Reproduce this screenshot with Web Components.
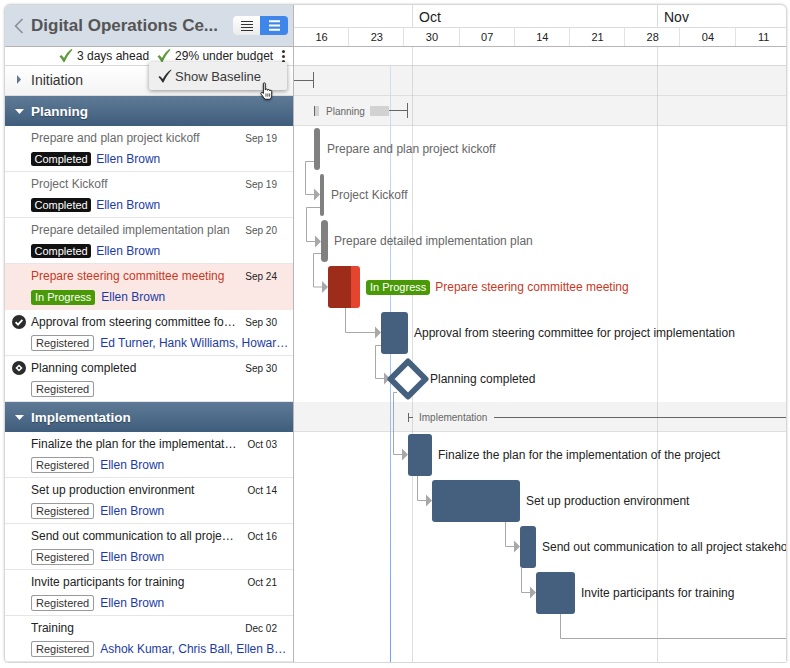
<!DOCTYPE html>
<html>
<head>
<meta charset="utf-8">
<style>
  html, body { margin: 0; background: #fff; }
  body { font-family: "Liberation Sans", Arial, sans-serif; padding: 5px 4px 0 5px; height: 663px; box-sizing: border-box; overflow: hidden; }
</style>
</head>
<body>
<gantt-app>
  <task-pane slot="left">
    <pane-title>Digital Operations Ce...</pane-title>
    <status-bar></status-bar>
    <section-row collapsed>Initiation</section-row>
    <section-row open>Planning</section-row>
    <task-row date="Sep 19" status="Completed" who="Ellen Brown">Prepare and plan project kickoff</task-row>
    <task-row date="Sep 19" status="Completed" who="Ellen Brown">Project Kickoff</task-row>
    <task-row date="Sep 20" status="Completed" who="Ellen Brown">Prepare detailed implementation plan</task-row>
    <task-row date="Sep 24" status="In Progress" who="Ellen Brown">Prepare steering committee meeting</task-row>
    <task-row date="Sep 30" status="Registered" who="Ed Turner, Hank Williams, Howard Lee" icon="check">Approval from steering committee for project implementation</task-row>
    <task-row date="Sep 30" status="Registered" icon="milestone">Planning completed</task-row>
    <section-row open>Implementation</section-row>
    <task-row date="Oct 03" status="Registered" who="Ellen Brown">Finalize the plan for the implementation of the project</task-row>
    <task-row date="Oct 14" status="Registered" who="Ellen Brown">Set up production environment</task-row>
    <task-row date="Oct 16" status="Registered" who="Ellen Brown">Send out communication to all project stakeholders</task-row>
    <task-row date="Oct 21" status="Registered" who="Ellen Brown">Invite participants for training</task-row>
    <task-row date="Dec 02" status="Registered" who="Ashok Kumar, Chris Ball, Ellen Brown">Training</task-row>
  </task-pane>
  <gantt-chart slot="right">
    <gantt-bar x="314" y="128" w="6" kind="done"></gantt-bar>
    <gantt-bar x="320" y="174" w="4" kind="done"></gantt-bar>
    <gantt-bar x="321" y="220" w="7" kind="done"></gantt-bar>
    <gantt-bar x="328" y="266" w="32" kind="active" split="23"></gantt-bar>
    <gantt-bar x="381" y="312" w="27"></gantt-bar>
    <gantt-bar x="408" y="434" w="24"></gantt-bar>
    <gantt-bar x="432" y="480" w="88"></gantt-bar>
    <gantt-bar x="520" y="526" w="16"></gantt-bar>
    <gantt-bar x="536" y="572" w="39"></gantt-bar>
    <gantt-label x="327" y="149" tone="done">Prepare and plan project kickoff</gantt-label>
    <gantt-label x="331" y="195" tone="done">Project Kickoff</gantt-label>
    <gantt-label x="334" y="241" tone="done">Prepare detailed implementation plan</gantt-label>
    <gantt-label x="366" y="287" tone="active" pill="In Progress">Prepare steering committee meeting</gantt-label>
    <gantt-label x="414" y="333">Approval from steering committee for project implementation</gantt-label>
    <gantt-label x="430" y="379">Planning completed</gantt-label>
    <gantt-label x="438" y="455">Finalize the plan for the implementation of the project</gantt-label>
    <gantt-label x="526" y="501">Set up production environment</gantt-label>
    <gantt-label x="542" y="547">Send out communication to all project stakeholders</gantt-label>
    <gantt-label x="581" y="593">Invite participants for training</gantt-label>
    <gantt-label x="326" y="111" tone="summary">Planning</gantt-label>
    <gantt-label x="419" y="417" tone="summary">Implementation</gantt-label>
  </gantt-chart>
  <baseline-menu slot="overlay">Show Baseline</baseline-menu>
</gantt-app>

<script>
// small helper, every component gets an open shadow root from a string
function shadow(el, html) {
  const root = el.attachShadow({ mode: 'open' });
  root.innerHTML = html;
  return root;
}

const CHECK = 'M0.5 7.5 L2.4 6 L5 9 C6.8 5.4 9 2.4 12.4 0 L13.5 .8 C10.4 4.2 7.8 8.2 5.6 13 L4.4 13 C3.2 10.8 2 9.2 0.5 7.5 Z';
const THIN_CHECK = 'M0.5 8 L1.8 7 L4.8 10 C6.8 6 9.4 3 13 .5 L13.5 1 C10.4 4.4 7.6 8.6 5.4 13.5 L4.6 13.5 C3.4 11.400 2 9.600 0.5 8 Z';

class GanttApp extends HTMLElement {
  constructor() {
    super();
    shadow(this, `
      <style>
        :host { display: block; position: relative; width: 781px; height: 657px; }
        .win {
          display: flex; width: 100%; height: 100%; background: #fff;
          border-radius: 5px 5px 0 4px; overflow: hidden;
          box-shadow: 0 0 3px rgba(0,0,0,.45);
        }
        .left { flex: 0 0 289px; width: 289px; min-width: 0; overflow: hidden; box-sizing: border-box; border-right: 1px solid #b9b6bb; }
        .right { flex: 1; min-width: 0; overflow: hidden; }
      </style>
      <div class="win">
        <div class="left"><slot name="left"></slot></div>
        <div class="right"><slot name="right"></slot></div>
      </div>
      <slot name="overlay"></slot>`);
  }
}

class TaskPane extends HTMLElement {
  constructor() {
    super();
    shadow(this, `<style>:host { display: block; }</style><slot></slot>`);
  }
}

class PaneTitle extends HTMLElement {
  constructor() {
    super();
    shadow(this, `
      <style>
        :host {
          display: flex; align-items: center; height: 41px; box-sizing: content-box;
          background: #d5dde7; border-bottom: 1px solid #b4b4b8;
        }
        svg { display: block; }
        .back { margin: 0 7px 0 9px; }
        .t { flex: 0 0 196px; padding-top: 1px; box-sizing: border-box; font: bold 17px "Liberation Sans", Arial, sans-serif; color: #555; white-space: nowrap; }
        .sw { display: flex; width: 55px; height: 19px; margin-left: 6px; border-radius: 4px; overflow: hidden; box-shadow: inset 0 0 0 1px #c3c8d0; }
        .sw div { display: flex; align-items: center; justify-content: center; }
        .a { width: 27px; background: linear-gradient(#fff, #ececec); }
        .b { flex: 1; background: #3f86ea; }
      </style>
      <svg class="back" width="10" height="16" viewBox="0 0 10 16"><path d="M8.500 1 L1.600 8 L8.500 15" fill="none" stroke="#8c9199" stroke-width="1.7"/></svg>
      <span class="t"><slot></slot></span>
      <div class="sw">
        <div class="a"><svg width="12" height="10" viewBox="0 0 12 10"><path d="M0 .5H12M0 3.5H12M0 6.5H12M0 9.5H12" stroke="#333" stroke-width="1"/></svg></div>
        <div class="b"><svg width="11" height="11" viewBox="0 0 11 11"><path d="M0 1.200H11M0 5.500H11M0 9.800H11" stroke="#fff" stroke-width="2"/></svg></div>
      </div>`);
  }
}

class StatusBar extends HTMLElement {
  constructor() {
    super();
    const ck = `<svg width="14" height="14" viewBox="0 0 14 14"><path d="${CHECK}" fill="#5f9a3d"/></svg>`;
    shadow(this, `
      <style>
        :host {
          display: flex; align-items: center; height: 18px; border-bottom: 1px solid #d8d8d8;
          padding-left: 54px; font: 12px "Liberation Sans", Arial, sans-serif; color: #222; white-space: nowrap;
        }
        svg { display: block; margin-right: 4px; flex: none; }
        .s { margin-right: 8px; }
        .k { display: flex; flex-direction: column; gap: 2px; margin-left: 8.5px; }
        .k i { width: 3px; height: 3px; border-radius: 50%; background: #333; }
      </style>
      ${ck}<span class="s">3 days ahead</span>
      ${ck}<span>29% under budget</span>
      <div class="k"><i></i><i></i><i></i></div>`);
  }
}

class SectionRow extends HTMLElement {
  constructor() {
    super();
    const open = this.hasAttribute('open');
    shadow(this, `
      <style>
        :host {
          display: flex; align-items: center; height: 30px; box-sizing: border-box;
          font-family: "Liberation Sans", Arial, sans-serif;
          ${open
            ? 'font-size: 13.5px; background: linear-gradient(#5e7a96, #3f5d7c); color: #fff; font-weight: bold; text-shadow: 0 1px 1px rgba(0,0,0,.35);'
            : 'font-size: 14px; padding-bottom: 2px; background: linear-gradient(#fff, #f3f3f3); color: #333; border-bottom: 1px solid #dcdcdc;'}
        }
        svg { display: block; flex: none; margin-left: ${open ? 10 : 12}px; margin-right: ${open ? 7 : 10}px; }
      </style>
      ${open
        ? '<svg width="9" height="5" viewBox="0 0 9 5"><path d="M0 0H9L4.500 5Z" fill="#fff"/></svg>'
        : '<svg width="4" height="9" viewBox="0 0 4 9"><path d="M0 0L4 4.500L0 9Z" fill="#64778f"/></svg>'}
      <span><slot></slot></span>`);
  }
}

class StatusPill extends HTMLElement {
  constructor() {
    super();
    const s = this.getAttribute('status');
    const css = s === 'Completed' ? 'background:#111;color:#fff;padding:0 3.5px;height:14px;'
      : s === 'In Progress' ? 'background:#4a9a08;color:#fff;padding:0 4px;height:15px;'
      : 'background:#fff;color:#333;box-shadow:inset 0 0 0 1px #9a9a9a;padding:0 5px;height:16px;';
    shadow(this, `
      <style>
        :host { display: inline-flex; align-items: center; box-sizing: border-box; border-radius: 2.5px; flex: none;
          font: 11px "Liberation Sans", Arial, sans-serif; white-space: nowrap; ${css} }
      </style>${s}`);
  }
}

class TaskRow extends HTMLElement {
  constructor() {
    super();
    const st = this.getAttribute('status');
    const who = this.getAttribute('who') || '';
    const icon = this.getAttribute('icon');
    const colour = st === 'Completed' ? '#6a6a6a' : st === 'In Progress' ? '#c8381f' : '#222';
    const dateCol = st === 'Completed' ? '#555' : '#222';
    let mark = '';
    if (icon === 'check') mark = '<svg class="m" width="14" height="14" viewBox="0 0 14 14"><circle cx="7" cy="7" r="7" fill="#2b2b2b"/><path d="M3.600 7.200L6 9.600L10.400 4.800" fill="none" stroke="#fff" stroke-width="1.900"/></svg>';
    if (icon === 'milestone') mark = '<svg class="m" width="14" height="14" viewBox="0 0 14 14"><circle cx="7" cy="7" r="7" fill="#2b2b2b"/><path d="M7 3.400L10.600 7L7 10.600L3.400 7Z" fill="#fff"/><path d="M7 5.500L8.500 7L7 8.500L5.500 7Z" fill="#2b2b2b"/></svg>';
    shadow(this, `
      <style>
        :host {
          display: block; position: relative; height: 46px; box-sizing: border-box; padding: 4px 16px 0 26px;
          border-bottom: 1px solid #e6e6e6; font: 12px "Liberation Sans", Arial, sans-serif;
          ${st === 'In Progress' ? 'background:#fbe8e5;border-bottom-color:#fbe8e5;' : ''}
        }
        .m { position: absolute; left: 7px; top: 5px; }
        .l1, .l2 { display: flex; align-items: center; height: 16px; }
        .l2 { margin-top: 5px; margin-right: -12px; }
        .n { flex: 1; min-width: 0; overflow: hidden; text-overflow: ellipsis; white-space: nowrap; color: ${colour}; margin-right: 6px; }
        .d { flex: 0 0 33px; text-align: right; font-size: 10px; white-space: nowrap; color: ${dateCol}; }
        .w { margin-left: ${st === 'Completed' ? 5 : 6}px; min-width: 0; overflow: hidden; text-overflow: ellipsis; white-space: nowrap; color: #1c3aa5; }
      </style>
      ${mark}
      <div class="l1"><span class="n"><slot></slot></span><span class="d">${this.getAttribute('date')}</span></div>
      <div class="l2"><status-pill status="${st}"></status-pill>${who ? `<span class="w">${who}</span>` : ''}</div>`);
  }
}

class GanttChart extends HTMLElement {
  constructor() {
    super();
    const months = [['', 118], ['Oct', 245], ['Nov', 129]];
    const weeks = ['16', '23', '30', '07', '14', '21', '28', '04', '11'];
    shadow(this, `
      <style>
        :host { display: block; height: 100%; font-family: "Liberation Sans", Arial, sans-serif; }
        .mon { display: flex; height: 22px; box-sizing: content-box; border-bottom: 1px solid #dcdcdc; }
        .mon div { box-sizing: border-box; padding-left: 6px; font-size: 14px; line-height: 24px; color: #222; }
        .mon div + div { border-left: 1px solid #dcdcdc; }
        .wk { display: flex; height: 18px; border-bottom: 1px solid #b7b5b9; }
        .wk div { flex: 0 0 55.2px; box-sizing: border-box; padding-left: 1px; text-align: center; font-size: 11px; line-height: 18px; color: #222; border-right: 1px solid #e2e2e2; }
        .wk div:last-child { border-right: 0; }
        .canvas { position: relative; height: 615px; overflow: hidden; }
        .band { box-sizing: border-box; }
        .grey { background: #f3f3f3; border-bottom: 1px solid #dedede; }
        .top { height: 19px; border-bottom: 1px solid #d8d8d8; }
        .vl { position: absolute; top: 0; bottom: 0; width: 1px; background: rgba(190,190,190,.5); }
        .today { position: absolute; top: 19px; bottom: 0; left: 96px; width: 1px; background: linear-gradient(#cfe0f8, #a6c9f8 45%, #6aa5f2); }
        svg.lines { position: absolute; left: 0; top: 0; width: 492px; height: 615px; }
      </style>
      <div class="mon">${months.map(m => `<div style="flex:0 0 ${m[1]}px">${m[0]}</div>`).join('')}</div>
      <div class="wk">${weeks.map(w => `<div>${w}</div>`).join('')}</div>
      <div class="canvas">
        <div class="band top"></div>
        <div class="band grey" style="height:30px"></div>
        <div class="band grey" style="height:30px"></div>
        <div class="band" style="height:276px"></div>
        <div class="band grey" style="height:30px"></div>
        <div class="vl" style="left:118px"></div>
        <div class="vl" style="left:363px"></div>
        <div class="today"></div>
        <svg class="lines" viewBox="294 47 492 615">
          <g fill="none" stroke="#a8a8a8" stroke-width="1">
            <path d="M314 161.500H305.500V194.500H315"/>
            <path d="M320 207.500H306.500V241.500H316"/>
            <path d="M321 253.500H313.500V287H322"/>
            <path d="M345.500 308V332.500H375"/>
            <path d="M381 345.500H375.500V378.500H384"/>
            <path d="M397 392.500H393.500V454.500H402"/>
            <path d="M417.500 476V500.500H426"/>
            <path d="M505.500 522V546.500H514"/>
            <path d="M521.500 568V592.500H530"/>
            <path d="M560.500 614V638.500H786"/>
          </g>
          <g fill="#a8a8a8">
            <path d="M314 188.500L320 194.500L314 200.500Z"/>
            <path d="M315 235.500L321 241.500L315 247.500Z"/>
            <path d="M322 281L328 287L322 293Z"/>
            <path d="M375 326.500L381 332.500L375 338.500Z"/>
            <path d="M384 372.500L390 378.500L384 384.500Z"/>
            <path d="M402 448.500L408 454.500L402 460.500Z"/>
            <path d="M426 494.500L432 500.500L426 506.500Z"/>
            <path d="M514 540.500L520 546.500L514 552.500Z"/>
            <path d="M530 586.500L536 592.500L530 598.500Z"/>
          </g>
          <g stroke="#666" stroke-width="1" fill="none">
            <path d="M294 80.500H313.500M313.500 72V88"/>
            <path d="M314.500 106V116"/>
            <path d="M389 110.500H407.500M407.500 103V118"/>
            <path d="M408.500 413V422M408.500 417.500H413M494 417.500H786"/>
          </g>
          <rect x="315" y="106" width="4" height="10" fill="#d2d2d2"/>
          <rect x="370" y="106" width="19" height="10" fill="#d2d2d2"/>
          <path d="M408 361.500L425.500 379L408 396.500L390.500 379Z" fill="#fff" stroke="#44607e" stroke-width="6" stroke-linejoin="round"/>
        </svg>
        <slot></slot>
      </div>`);
  }
}

// x / y below are given in window coordinates of the chart, canvas starts at 294,47
class GanttBar extends HTMLElement {
  constructor() {
    super();
    const kind = this.getAttribute('kind');
    const split = this.getAttribute('split');
    const bg = kind === 'done' ? '#808080'
      : kind === 'active' ? `linear-gradient(90deg, #9e2c1b ${split}px, #e5452f ${split}px)` : '#44607e';
    shadow(this, `
      <style>
        :host {
          display: block; position: absolute; height: 42px;
          left: ${this.getAttribute('x') - 294}px; top: ${this.getAttribute('y') - 47}px; width: ${this.getAttribute('w')}px;
          background: ${bg}; border-radius: ${kind === 'done' ? '4px' : '3px'};
        }
      </style>`);
  }
}

class GanttLabel extends HTMLElement {
  constructor() {
    super();
    const tone = this.getAttribute('tone');
    const pill = this.getAttribute('pill');
    const col = tone === 'done' ? '#666' : tone === 'active' ? '#c8381f' : tone === 'summary' ? '#666' : '#222';
    shadow(this, `
      <style>
        :host {
          display: flex; align-items: center; gap: 5px; position: absolute; height: 16px; white-space: nowrap;
          left: ${this.getAttribute('x') - 294}px; top: ${this.getAttribute('y') - 47 - 8}px;
          font: ${tone === 'summary' ? '10px' : '12px'} "Liberation Sans", Arial, sans-serif; color: ${col};
        }
        .p { background: #4a9a08; color: #fff; border-radius: 3px; height: 15px; line-height: 15px; padding: 0 4px; font-size: 11px; }
      </style>
      ${pill ? `<span class="p">${pill}</span>` : ''}<span><slot></slot></span>`);
  }
}

class BaselineMenu extends HTMLElement {
  constructor() {
    super();
    shadow(this, `
      <style>
        :host {
          display: flex; align-items: center; position: absolute; left: 144px; top: 57px; width: 138px; height: 28px;
          box-sizing: border-box; padding-left: 9px; background: #efefef; border-radius: 2px;
          box-shadow: 0 1px 4px rgba(0,0,0,.4); font: 13px "Liberation Sans", Arial, sans-serif; color: #3a3a3a;
        }
        svg.c { display: block; margin-right: 3px; }
        svg.h { position: absolute; left: 110px; top: 20px; filter: drop-shadow(0 1px 1px rgba(0,0,0,.35)); }
      </style>
      <svg class="c" width="14" height="14" viewBox="0 0 14 14"><path d="${THIN_CHECK}" fill="#2e2e2e"/></svg>
      <span><slot></slot></span>
      <svg class="h" width="15" height="18" viewBox="1 0 12 17.200">
        <path d="M4 1.500C4 .5 5.800 .5 5.800 1.500V7.500C6 6.500 8 6.500 8 7.500V8C8.200 7 10 7 10 8V8.500C10.300 7.600 12 7.800 12 8.800V12.500C12 14.500 11 15.500 10.500 16.500H5.500C4.500 15 3.500 13.800 2 11.800C1 10.300 2.500 9.300 3.500 10.300L4 11Z" fill="#fff" stroke="#111" stroke-width=".9" stroke-linejoin="round"/>
        <path d="M6.500 11V14M8.300 11V14M10 11V14" stroke="#111" stroke-width=".7"/>
      </svg>`);
  }
}

customElements.define('gantt-app', GanttApp);
customElements.define('task-pane', TaskPane);
customElements.define('pane-title', PaneTitle);
customElements.define('status-bar', StatusBar);
customElements.define('section-row', SectionRow);
customElements.define('status-pill', StatusPill);
customElements.define('task-row', TaskRow);
customElements.define('gantt-chart', GanttChart);
customElements.define('gantt-bar', GanttBar);
customElements.define('gantt-label', GanttLabel);
customElements.define('baseline-menu', BaselineMenu);
</script>
</body>
</html>
